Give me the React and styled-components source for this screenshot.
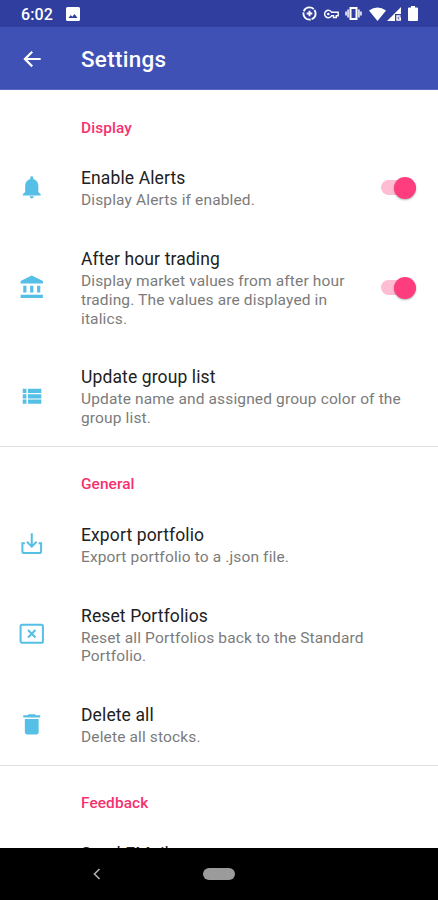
import React from 'react';
import styled, { createGlobalStyle } from 'styled-components';

const Global = createGlobalStyle`
  * { box-sizing: border-box; }
  body { margin: 0; background: #fff; font-family: Roboto, "Liberation Sans", sans-serif; }
`;
const Screen = styled.div`
  width: 438px; height: 900px; display: flex; flex-direction: column; overflow: hidden; background: #fff;
`;
const StatusBar = styled.div`
  flex: none; height: 27px; background: #303f9f; color: #fff; display: flex; align-items: center;
  padding: 0 20px 0 21px; font-size: 16px; font-weight: 500;
`;
const Clock = styled.span`width: 45px; padding-top: 1px; letter-spacing: 0.1px;`;
const StatusIcons = styled.div`margin-left: auto; display: flex; align-items: center;`;
const Glyph = styled.svg`
  display: block; flex: none; width: ${p => p.$w}px; height: ${p => p.$h || p.$w}px; margin-left: ${p => p.$gap || 0}px;
`;
const AppBar = styled.header`
  flex: none; height: 63px; background: #3f51b5; border-bottom: 1px solid #5a69bf; color: #fff;
  display: flex; align-items: center; padding: 1px 19px 0;
`;
const Title = styled.h1`margin: 1px 0 0 36px; font-size: 22.4px; line-height: 26px; font-weight: 500; letter-spacing: 0.3px;`;
const List = styled.main`flex: none; height: 758px; overflow: hidden;`;
const Section = styled.section`
  border-bottom: 1px solid #e0e0e0;
`;
const Heading = styled.h2`
  margin: 0; height: 56.5px; padding: 28.5px 0 0 81px; font-size: 15.4px; line-height: 19px; font-weight: 500;
  color: #f5316f; letter-spacing: 0.1px;
`;
const Row = styled.div`
  display: flex; align-items: center; padding: ${p => (p.$last ? 17.6 : 19.6)}px 22px 19.6px 0;
`;
const IconCell = styled.div`flex: none; width: 81px; padding-left: 19px; color: #55bfe5;`;
const Copy = styled.div`
  flex: none; width: ${p => (p.$narrow ? 280 : 340)}px; padding-top: 2px; margin-bottom: -2px;
`;
const Name = styled.div`font-size: 17.5px; line-height: 20px; color: #212121; letter-spacing: 0.12px;`;
const Summary = styled.div`
  margin-top: 3px; font-size: 15.5px; line-height: 18.75px; color: #7b7b7b; letter-spacing: 0.14px;
`;
const Track = styled.div`
  margin-left: auto; margin-top: 2px; width: 35px; height: 15px; border-radius: 8px; background: #ffbdd3;
  display: flex; align-items: center; justify-content: flex-end;
`;
const Thumb = styled.div`
  flex: none; width: 22px; height: 22px; border-radius: 50%; background: #fd3d7d; box-shadow: 0 1px 2px rgba(0,0,0,.3);
`;
const NavBar = styled.nav`
  flex: none; height: 52px; background: #000; display: flex; align-items: center; padding-left: 92px;
`;
const HomePill = styled.div`margin-left: 101px; width: 32px; height: 12px; border-radius: 6px; background: #9b9b9b;`;

const drawings = {
  bell: <path fill="currentColor" d="M12 23c1.100 0 2-.9 2-2h-4c0 1.100.9 2 2 2zm6.200-6v-6c0-3.200-1.800-5.700-4.800-6.400V3.500c0-.8-.6-1.400-1.400-1.400s-1.400.6-1.400 1.400v1.100C7.600 5.300 5.800 7.800 5.800 11v6l-2.200 2v1.200h16.800V19z" />,
  bank: <path fill="currentColor" d="M12 1.500 1.500 6.500V9h21V6.500zM4 11h3v6.500H4zm6.500 0h3v6.500h-3zm6.500 0h3v6.500h-3zM1.500 19.500h21V22.500h-21z" />,
  list: <path fill="currentColor" d="M3.500 14.500h3.500v-4H3.500zm0 5h3.500v-4H3.500zm0-10h3.500v-4H3.500zm5 5h12.500v-4H8.500zm0 5h12.500v-4H8.500zm0-14v4h12.500v-4z" />,
  save: <path fill="none" stroke="currentColor" strokeWidth="1.900" d="M12 2v12.500M7.500 10.200l4.500 4.500 4.500-4.500M5.500 11.500H3.200v7.500q0 1.800 1.800 1.800h14q1.800 0 1.800-1.800v-7.500h-2.300" />,
  reset: <path fill="none" stroke="currentColor" strokeWidth="1.9" d="M3 3.500h18q1.500 0 1.500 1.500v14q0 1.500-1.500 1.500H3q-1.500 0-1.500-1.500V5Q1.500 3.500 3 3.500zM8.500 8.500l7 7m0-7-7 7" />,
  trash: <path fill="currentColor" d="M5.500 20c0 1.100.9 2 2 2h9c1.100 0 2-.9 2-2V7.500h-13zM20 4h-4l-1-1H9L8 4H4v2h16z" />,
};

function Item({ icon, name, summary, on, last }) {
  return (
    <Row $last={last}>
      <IconCell><Glyph $w={25.5} viewBox="0 0 24 24">{drawings[icon]}</Glyph></IconCell>
      <Copy $narrow={on}>
        <Name>{name}</Name>
        {summary && <Summary>{summary}</Summary>}
      </Copy>
      {on && <Track><Thumb /></Track>}
    </Row>
  );
}

export default function App() {
  return (
    <Screen>
      <Global />
      <StatusBar>
        <Clock>6:02</Clock>
        <Glyph $w={14} viewBox="0 0 14 14">
          <path fill="#fff" fillRule="evenodd" d="M1.500 0h11Q14 0 14 1.500v11q0 1.500-1.500 1.500h-11Q0 14 0 12.500v-11Q0 0 1.500 0zM2.500 11h9L8.500 7l-2.200 2.700L4.800 8z" />
        </Glyph>
        <StatusIcons>
          <Glyph $w={15} viewBox="0 0 16 16">
            <circle cx="8" cy="8" r="6.500" fill="none" stroke="#fff" strokeWidth="2" strokeDasharray="12.600 1" strokeDashoffset="5" />
            <path stroke="#fff" strokeWidth="2" d="M8 5v6M5 8h6" />
          </Glyph>
          <Glyph $w={15} $h={10} $gap={7} viewBox="0 0 15 10">
            <path fill="none" stroke="#fff" strokeWidth="1.400" d="M7.600 3.300A3.700 3.700 0 1 0 7.600 6.700H9.500V8.500H12.300V6.700H14.200V3.300z" />
            <circle cx="4.300" cy="5" r="1.300" fill="#fff" />
          </Glyph>
          <Glyph $w={17} $h={13} $gap={6} viewBox="0 0 17 13">
            <path fill="none" stroke="#fff" strokeWidth="2" d="M5.500 1h6v11h-6z" />
            <path fill="none" stroke="#fff" strokeOpacity=".8" strokeWidth="2" d="M3.200 2.500v8M13.800 2.500v8M1.100 4.500v4M15.900 4.500v4" />
          </Glyph>
          <Glyph $w={17} $h={14} $gap={7} viewBox="0 0 17 14">
            <path fill="#fff" d="M0 3.500Q8.500-2.500 17 3.500L8.500 14z" />
          </Glyph>
          <Glyph $w={14} $gap={1} viewBox="0 0 14 14">
            <path fill="#fff" d="M14 0v7H8v7H0z" />
            <path fill="none" stroke="#fff" strokeWidth="1.400" d="M13.500 9H10v4h3.500v-2h-2" />
          </Glyph>
          <Glyph $w={10} $h={15} $gap={7} viewBox="0 0 10 15">
            <path fill="#fff" d="M3 0h4v1.500h2q1 0 1 1V14q0 1-1 1H1q-1 0-1-1V2.500q0-1 1-1h2z" />
          </Glyph>
        </StatusIcons>
      </StatusBar>
      <AppBar>
        <Glyph $w={26} viewBox="0 0 24 24">
          <path fill="#fff" d="M20 11H7.830l5.090-5.090L11.500 4.500l-7.500 7.500 7.500 7.500 1.410-1.410L7.830 13H20z" />
        </Glyph>
        <Title>Settings</Title>
      </AppBar>
      <List>
        <Section>
          <Heading>Display</Heading>
          <Item icon="bell" name="Enable Alerts" summary="Display Alerts if enabled." on />
          <Item icon="bank" name="After hour trading" summary="Display market values from after hour trading. The values are displayed in italics." on />
          <Item icon="list" name="Update group list" summary="Update name and assigned group color of the group list." />
        </Section>
        <Section>
          <Heading>General</Heading>
          <Item icon="save" name="Export portfolio" summary="Export portfolio to a .json file." />
          <Item icon="reset" name="Reset Portfolios" summary="Reset all Portfolios back to the Standard Portfolio." />
          <Item icon="trash" name="Delete all" summary="Delete all stocks." />
        </Section>
        <Section>
          <Heading>Feedback</Heading>
          <Item name="Send EMail" last />
        </Section>
      </List>
      <NavBar>
        <Glyph $w={10} $h={12} viewBox="0 0 10 12">
          <path fill="none" stroke="#aaa" strokeWidth="1.700" d="M7.500 1 2.500 6l5 5" />
        </Glyph>
        <HomePill />
      </NavBar>
    </Screen>
  );
}
